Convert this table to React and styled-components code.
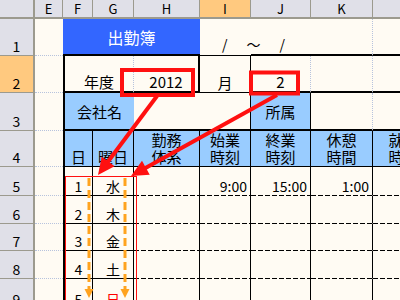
import styled, { createGlobalStyle } from "styled-components";

const GlobalStyle = createGlobalStyle`
  body {
    margin: 0;
    background: #fffbf3;
    font-family: "Noto Sans CJK JP", "Noto Sans", sans-serif;
  }
`;

const line = "1px solid #000";
const thick = "2px solid #000";
const grid = "1px dotted #b7c3dd";
const headLine = "#9c9a8e";

const Sheet = styled.div`
  position: relative;
  width: 400px;
  height: 300px;
  overflow: hidden;
  display: grid;
  grid-template-columns: 35px 28px 30px 41px 66px 51px 60px 62px 62px;
  grid-template-rows: 19px 37px 37px 38px 36px 29px 28px 27px 28px 30px;
  background: #fffbf3;
`;

const ColHead = styled.div`
  box-sizing: border-box;
  background: ${(p) => (p.$active ? "#ffc97f" : "#e0e0e8")};
  border-right: ${(p) => (p.$corner ? 2 : 1)}px solid ${headLine};
  border-bottom: 2px solid ${headLine};
  display: flex;
  align-items: center;
  justify-content: center;
  font-size: 13px;
  line-height: 1;
  color: #000;
`;

const RowHead = styled.div`
  box-sizing: border-box;
  background: ${(p) => (p.$active ? "#ffc97f" : "#e0e0e8")};
  border-right: 2px solid ${headLine};
  border-bottom: 1px solid ${headLine};
  display: flex;
  align-items: flex-end;
  justify-content: center;
  padding-bottom: 1px;
  font-size: 14px;
  line-height: 16px;
`;

const Cell = styled.div`
  box-sizing: border-box;
  grid-column: span ${(p) => p.$span || 1};
  background-color: ${(p) => p.$bg || "#fffbf3"};
  border-left: ${(p) => p.$bl || "none"};
  border-right: ${(p) => p.$br || grid};
  border-bottom: ${(p) => p.$bb || grid};
  display: flex;
  align-items: ${(p) => (p.$middle ? "center" : "flex-end")};
  justify-content: ${(p) => p.$align || "center"};
  padding: 0 3px ${(p) => (p.$middle ? 0 : 1)}px;
  font-size: ${(p) => p.$size || 15}px;
  line-height: 17px;
  color: ${(p) => p.$color || "#000"};
  white-space: nowrap;
  overflow: ${(p) => (p.$spill ? "visible" : "hidden")};
  position: ${(p) => (p.$spill ? "relative" : "static")};
  z-index: ${(p) => (p.$spill ? 1 : "auto")};
`;

const HeadCell = styled(Cell)`
  background-color: #99ccff;
  border-right: ${line};
  border-bottom: ${line};
  padding-bottom: 0;
  overflow: visible;
`;

const DataCell = styled(Cell)`
  font-size: 14px;
  line-height: 16px;
  border-right: ${line};
  background-image: ${(p) =>
    p.$dash
      ? "repeating-linear-gradient(to right, #000 0 5px, transparent 5px 7px)"
      : "none"};
  background-size: 100% 1px;
  background-position: left bottom;
  background-repeat: no-repeat;
  background-origin: border-box;
  border-bottom: ${(p) => (p.$dash ? "1px solid transparent" : line)};
`;

const TitleCell = styled(Cell)`
  background-color: #3366ff;
  color: #fff;
  font-size: 16px;
  align-items: center;
  padding-top: 3px;
`;

const HeadLabel = styled.div`
  display: flex;
  flex-direction: column;
  align-items: center;
  line-height: 17px;
  padding-bottom: 1px;
`;

const Period = styled.div`
  display: flex;
  gap: 19px;
  padding-left: 19px;
  padding-bottom: 1px;
  font-size: 14px;
`;

const Overlay = styled.svg`
  position: absolute;
  left: 0;
  top: 0;
  pointer-events: none;
`;

const blue = "#99ccff";
const columns = ["E", "F", "G", "H", "I", "J", "K", "L"];
const days = [
  { n: 1, d: "水", start: "9:00", end: "15:00", rest: "1:00" },
  { n: 2, d: "木" },
  { n: 3, d: "金" },
  { n: 4, d: "土" },
  { n: 5, d: "日", red: true },
];
const heads = [
  ["勤務", "体系"],
  ["始業", "時刻"],
  ["終業", "時刻"],
  ["休憩", "時間"],
  ["就業", "時間"],
];

function Arrow({ x1, y1, x2, y2 }) {
  const len = Math.hypot(x2 - x1, y2 - y1);
  const ux = (x2 - x1) / len;
  const uy = (y2 - y1) / len;
  const bx = x2 - ux * 17;
  const by = y2 - uy * 17;
  const w = 8;
  const pts = `${x2},${y2} ${bx - uy * w},${by + ux * w} ${bx + uy * w},${by - ux * w}`;
  return (
    <g fill="#ff1010" stroke="none">
      <line x1={x1} y1={y1} x2={bx + ux * 2} y2={by + uy * 2} stroke="#ff1010" strokeWidth="4" />
      <polygon points={pts} />
    </g>
  );
}

function DownDash({ x }) {
  return (
    <g>
      <line x1={x} y1={178} x2={x} y2={289} stroke="#ffa31f" strokeWidth="3" strokeDasharray="8 4" />
      <polygon points={`${x - 4.5},289 ${x + 4.5},289 ${x},298`} fill="#ffa31f" />
    </g>
  );
}

export default function App() {
  return (
    <>
      <GlobalStyle />
      <Sheet>
        <ColHead $corner />
        {columns.map((c) => (
          <ColHead key={c} $active={c === "I"}>
            {c}
          </ColHead>
        ))}

        <RowHead>1</RowHead>
        <Cell $br="none" />
        <TitleCell $span={3} $br="none" $bb={thick}>
          出勤簿
        </TitleCell>
        <Cell $br="none" $bb={line} $spill $align="flex-start">
          <Period>
            <span>/</span>
            <span>～</span>
            <span>/</span>
          </Period>
        </Cell>
        <Cell $br="none" $bb={thick} />
        <Cell $bb={thick} />
        <Cell $bb={thick} />

        <RowHead $active>2</RowHead>
        <Cell $br="none" />
        <Cell $span={2} $bl={thick} $bb={thick}>
          年度
        </Cell>
        <Cell $bb={thick} $br={thick}>
          2012
        </Cell>
        <Cell $br={line} $bb={line}>
          月
        </Cell>
        <Cell $bb={thick}>2</Cell>
        <Cell $bb={thick} />
        <Cell $bb={thick} />

        <RowHead>3</RowHead>
        <Cell $br="none" />
        <Cell $span={2} $bl={thick} $bb={thick} $br="none" $bg={blue} $middle>
          会社名
        </Cell>
        <Cell $span={2} $bb={thick} $br={line} />
        <Cell $bb={thick} $br={line} $bg={blue} $middle>
          所属
        </Cell>
        <Cell $bb={thick} />
        <Cell $bb={thick} />

        <RowHead>4</RowHead>
        <Cell $br="none" />
        <HeadCell $bl={thick}>
          <HeadLabel>日</HeadLabel>
        </HeadCell>
        <HeadCell>
          <HeadLabel>曜日</HeadLabel>
        </HeadCell>
        {heads.map(([a, b]) => (
          <HeadCell key={a}>
            <HeadLabel>
              <span>{a}</span>
              <span>{b}</span>
            </HeadLabel>
          </HeadCell>
        ))}

        {days.map((r) => (
          <DayRow key={r.n} r={r} />
        ))}

        <Overlay width="400" height="300" viewBox="0 0 400 300">
          <rect x="122" y="70" width="71" height="25" fill="none" stroke="#ff1010" strokeWidth="4" />
          <rect x="251" y="72.5" width="47" height="21" fill="none" stroke="#ff1010" strokeWidth="4" />
          <rect x="65.5" y="176.5" width="71" height="200" fill="none" stroke="#ff1010" strokeWidth="1" />
          <DownDash x={89} />
          <DownDash x={125} />
          <Arrow x1={157} y1={96} x2={98} y2={175} />
          <Arrow x1={277} y1={95} x2={131} y2={176} />
        </Overlay>
      </Sheet>
    </>
  );
}

function DayRow({ r }) {
  return (
    <>
      <RowHead>{r.n + 4}</RowHead>
      <Cell $br="none" />
      <DataCell $bl={thick}>{r.n}</DataCell>
      <DataCell $color={r.red ? "#ff0000" : "#000"}>{r.d}</DataCell>
      <DataCell $dash />
      <DataCell $dash $align="flex-end">
        {r.start}
      </DataCell>
      <DataCell $dash $align="flex-end">
        {r.end}
      </DataCell>
      <DataCell $dash $align="flex-end">
        {r.rest}
      </DataCell>
      <DataCell $dash />
    </>
  );
}
